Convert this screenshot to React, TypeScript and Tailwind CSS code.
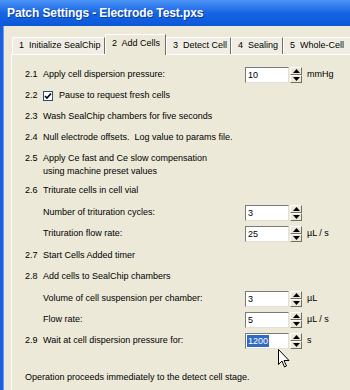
import React from 'react';

type Field = { value: string; unit?: string; selected?: boolean };

const Spinner: React.FC = () => (
  <div className="flex flex-col w-[12px] h-[16px] ml-[1px]">
    <div className="flex-1 flex items-center justify-center bg-[#ECE9D8] border-t border-l border-t-white border-l-white border-b border-r border-b-[#716F64] border-r-[#716F64]">
      <svg width="7" height="4" viewBox="0 0 7 4">
        <polygon points="3.5,0 7,4 0,4" fill="#000" />
      </svg>
    </div>
    <div className="flex-1 flex items-center justify-center bg-[#ECE9D8] border-t border-l border-t-white border-l-white border-b border-r border-b-[#716F64] border-r-[#716F64]">
      <svg width="7" height="4" viewBox="0 0 7 4">
        <polygon points="0,0 7,0 3.5,4" fill="#000" />
      </svg>
    </div>
  </div>
);

const NumberBox: React.FC<Field> = ({ value, unit, selected }) => (
  <div className="flex items-center">
    <div className="w-[44px] h-[16px] bg-white border-t border-l border-t-[#7a7a7a] border-l-[#7a7a7a] border-b border-r border-b-[#e4e2d8] border-r-[#e4e2d8] flex items-center pl-[1px]">
      <span className={selected ? 'bg-[#316AC5] text-white leading-[12px] px-[1px]' : 'leading-[12px] px-[1px]'}>{value}</span>
    </div>
    <Spinner />
    {unit && <span className="ml-[5px]">{unit}</span>}
  </div>
);

const Row: React.FC<{
  num?: string;
  label: React.ReactNode;
  field?: Field;
  className?: string;
}> = ({ num, label, field, className = '' }) => (
  <div className={`flex items-center h-[21px] ${className}`}>
    <div className="w-[220px] shrink-0 flex items-center">
      <span className="w-[18px] shrink-0">{num}</span>
      <span>{label}</span>
    </div>
    {field && <NumberBox {...field} />}
  </div>
);

const tabs = [
  { label: '1  Initialize SealChip', w: 'w-[93px]' },
  { label: '2  Add Cells', w: 'w-[61px]', active: true },
  { label: '3  Detect Cell', w: 'w-[65px]' },
  { label: '4  Sealing', w: 'w-[52px]' },
  { label: '5  Whole-Cell', w: 'w-[80px]' },
];

export default function App() {
  return (
    <div
      className="relative w-[350px] h-[390px] overflow-hidden flex flex-col bg-[#ECE9D8] text-black"
      style={{ fontFamily: '"Liberation Sans", Arial, sans-serif' }}
    >
      {/* title bar */}
      <div className="h-[26px] shrink-0 flex items-center pl-[7px] bg-gradient-to-b from-[#4b93f6] via-[#1565e3] to-[#0b58d8]">
        <span className="text-white font-bold text-[12px] tracking-[-0.1px] [text-shadow:1px_1px_0_#0a3a9e]">
          Patch Settings - Electrode Test.pxs
        </span>
      </div>

      <div className="flex-1 flex min-h-0">
        <div className="w-[4px] shrink-0 bg-[#1a5fe0] border-r border-r-[#6f9cf0]" />
        <div className="flex-1 flex flex-col pl-[7px] pt-[7px] min-w-0">
          {/* tab strip */}
          <div className="flex items-end h-[21px] pl-[1px] text-[9px] relative z-10">
            {tabs.map((t) =>
              t.active ? (
                <div
                  key={t.label}
                  className={`${t.w} shrink-0 h-[21px] -mb-[1px] bg-[#ECE9D8] border-t border-l border-t-white border-l-white border-r border-r-[#716F64] flex items-center pl-[6px] pb-[2px] whitespace-pre`}
                >
                  {t.label}
                </div>
              ) : (
                <div
                  key={t.label}
                  className={`${t.w} shrink-0 h-[17px] bg-[#F0EEE4] border-t border-l border-t-white border-l-white border-r border-r-[#716F64] flex items-center pl-[6px] whitespace-pre`}
                >
                  {t.label}
                </div>
              )
            )}
          </div>

          {/* tab pane */}
          <div className="flex-1 border-t border-l border-t-white border-l-white pl-[13px] pt-[9px] text-[9px]">
            <Row num="2.1" label="Apply cell dispersion pressure:" field={{ value: '10', unit: 'mmHg' }} />
            <Row
              num="2.2"
              label={
                <span className="flex items-center">
                  <span className="w-[10px] h-[10px] bg-white border border-[#1c5180] flex items-center justify-center mr-[6px]">
                    <svg width="8" height="8" viewBox="0 0 8 8">
                      <path d="M1 4 L3 6 L7 1.5" stroke="#000" strokeWidth="1.6" fill="none" />
                    </svg>
                  </span>
                  Pause to request fresh cells
                </span>
              }
            />
            <Row num="2.3" label="Wash SealChip chambers for five seconds" />
            <div className="flex items-center h-[22px] whitespace-pre">
              <span className="w-[18px] shrink-0">2.4</span>
              <span>Null electrode offsets.  Log value to params file.</span>
            </div>
            <div className="flex pt-[3px] leading-[13px] h-[29px]">
              <span className="w-[18px] shrink-0">2.5</span>
              <span>
                Apply Ce fast and Ce slow compensation
                <br />
                using machine preset values
              </span>
            </div>
            <Row num="2.6" label="Triturate cells in cell vial" className="mt-[2px]" />
            <Row label="Number of trituration cycles:" field={{ value: '3' }} className="mt-[1px]" />
            <Row label="Trituration flow rate:" field={{ value: '25', unit: 'µL / s' }} />
            <Row num="2.7" label="Start Cells Added timer" className="mt-[1px]" />
            <Row num="2.8" label="Add cells to SealChip chambers" />
            <Row label="Volume of cell suspension per chamber:" field={{ value: '3', unit: 'µL' }} className="mt-[1px]" />
            <Row label="Flow rate:" field={{ value: '5', unit: 'µL / s' }} />
            <Row num="2.9" label="Wait at cell dispersion pressure for:" field={{ value: '1200', unit: 's', selected: true }} />
            <div className="mt-[16px] h-[21px] flex items-center">Operation proceeds immediately to the detect cell stage.</div>
          </div>
        </div>
      </div>

      {/* mouse pointer */}
      <svg className="absolute left-[278px] top-[349px]" width="12" height="19" viewBox="0 0 12 19">
        <path d="M0.5 0.5 L0.5 15.5 L4 12 L6.5 18 L8.5 17 L6 11.5 L11 11.5 Z" fill="#fff" stroke="#000" strokeWidth="1" strokeLinejoin="miter" />
      </svg>
    </div>
  );
}
